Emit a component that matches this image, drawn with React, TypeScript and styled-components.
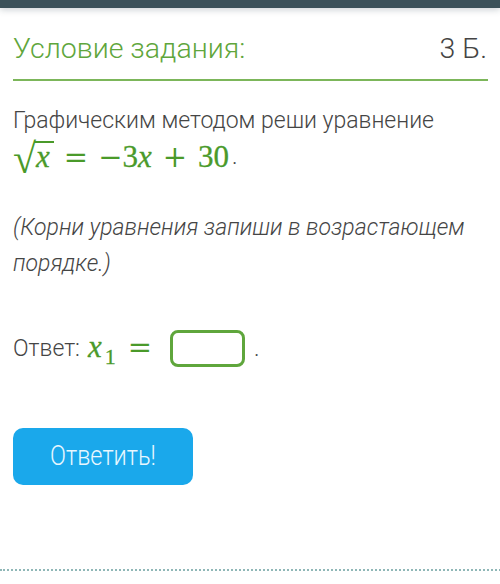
import React from "react";
import styled, { createGlobalStyle } from "styled-components";

const Global = createGlobalStyle`
  html, body { margin: 0; padding: 0; background: #fff; }
  body { font-family: Roboto, "Noto Sans", sans-serif; }
`;

const Page = styled.div`
  width: 500px;
  height: 584px;
  background: #fff;
  display: flex;
  flex-direction: column;
  overflow: hidden;
`;

const TopBar = styled.div`
  height: 8px;
  background: #3b5159;
  box-shadow: 0 2px 6px rgba(60, 80, 90, 0.25);
`;

const Content = styled.div`
  padding: 0 12px 0 13px;
  display: flex;
  flex-direction: column;
  flex: 1;
`;

const Header = styled.div`
  display: flex;
  justify-content: space-between;
  align-items: baseline;
  padding: 24px 0 13px;
  border-bottom: 2px solid #7cb65a;
`;

const Title = styled.div`
  font-size: 28.5px;
  font-weight: 300;
  color: #5fa63c;
  line-height: 34px;
`;

const Points = styled.div`
  font-size: 28.5px;
  font-weight: 300;
  color: #444;
  line-height: 34px;
  padding-right: 1px;
`;

const Para = styled.div<{ $italic?: boolean; $mt: number }>`
  margin-top: ${(p) => p.$mt}px;
  font-size: 23px;
  font-weight: 300;
  color: #454545;
  line-height: 36px;
  font-style: ${(p) => (p.$italic ? "italic" : "normal")};
`;

const MathLine = styled.div`
  display: flex;
  align-items: flex-end;
  height: 36px;
`;

const Math = styled.span<{ $ml?: number }>`
  font-family: "Liberation Serif", "DejaVu Serif", serif;
  color: #4a9a2a;
  font-size: 31px;
  line-height: 36px;
  white-space: nowrap;
  display: inline-flex;
  align-items: baseline;
  margin-left: ${(p) => p.$ml ?? 0}px;
  -webkit-text-stroke: 0.3px #4a9a2a;
`;

const MI = styled.i`
  font-style: italic;
`;

const Op = styled.span<{ $m: number }>`
  margin: 0 ${(p) => p.$m}px;
  font-family: "DejaVu Serif", serif;
  font-style: normal;
  font-size: 29px;
  line-height: 36px;
  -webkit-text-stroke: 0;
`;

const Sqrt = styled.span`
  display: inline-flex;
  align-items: flex-end;
  align-self: flex-end;
`;

const Radical = styled.span`
  font-size: 42px;
  line-height: 40px;
  margin-right: -2px;
  margin-bottom: -4px;
  -webkit-text-stroke: 0;
`;

const Radicand = styled.span`
  border-top: 2px solid #4a9a2a;
  padding: 0 4px 0 2px;
  line-height: 28px;
  margin-bottom: 4px;
  font-style: italic;
`;

const Sub = styled.span`
  font-style: normal;
  font-size: 22px;
  position: relative;
  top: 7px;
  margin-left: 3px;
`;

const Tail = styled.span`
  font-size: 23px;
  color: #454545;
  line-height: 36px;
  align-self: flex-end;
  margin-left: 3px;
`;

const AnswerRow = styled.div`
  margin-top: 47px;
  display: flex;
  align-items: center;
  font-size: 23px;
  font-weight: 300;
  color: #454545;
`;

const InputBox = styled.div`
  width: 69px;
  height: 31px;
  border: 3px solid #5fa63c;
  border-radius: 8px;
  margin-left: 6px;
  margin-right: 9px;
`;

const Button = styled.button`
  margin-top: 60px;
  width: 180px;
  height: 57px;
  border: none;
  border-radius: 10px;
  background: #1aa8eb;
  color: #e8f7ff;
  font-family: Roboto, sans-serif;
  font-weight: 300;
  cursor: pointer;
  padding: 0 0 2px;
`;

const ButtonLabel = styled.span`
  display: inline-block;
  font-size: 28px;
  transform: scaleX(0.84);
`;

const Spacer = styled.div`
  flex: 1;
`;

const Dotted = styled.div`
  border-top: 2px dotted #8fb7b7;
  margin: 0 -13px 13px;
`;

export default function App() {
  return (
    <Page>
      <Global />
      <TopBar />
      <Content>
        <Header>
          <Title>Условие задания:</Title>
          <Points>3 Б.</Points>
        </Header>
        <Para $mt={22}>
          Графическим методом реши уравнение
          <MathLine>
            <Math>
              <Sqrt>
                <Radical>√</Radical>
                <Radicand>x</Radicand>
              </Sqrt>
              <Op $m={10}>=</Op>
              <Op $m={0}>−</Op>3<MI>x</MI>
              <Op $m={11}>+</Op>30
            </Math>
            <Tail>.</Tail>
          </MathLine>
        </Para>
        <Para $italic $mt={35}>
          (Корни уравнения запиши в возрастающем
          <br />
          порядке.)
        </Para>
        <AnswerRow>
          Ответ:
          <Math $ml={8}>
            <MI>x</MI>
            <Sub>1</Sub>
            <Op $m={12}>=</Op>
          </Math>
          <InputBox />.
        </AnswerRow>
        <div>
          <Button>
            <ButtonLabel>Ответить!</ButtonLabel>
          </Button>
        </div>
        <Spacer />
        <Dotted />
      </Content>
    </Page>
  );
}
